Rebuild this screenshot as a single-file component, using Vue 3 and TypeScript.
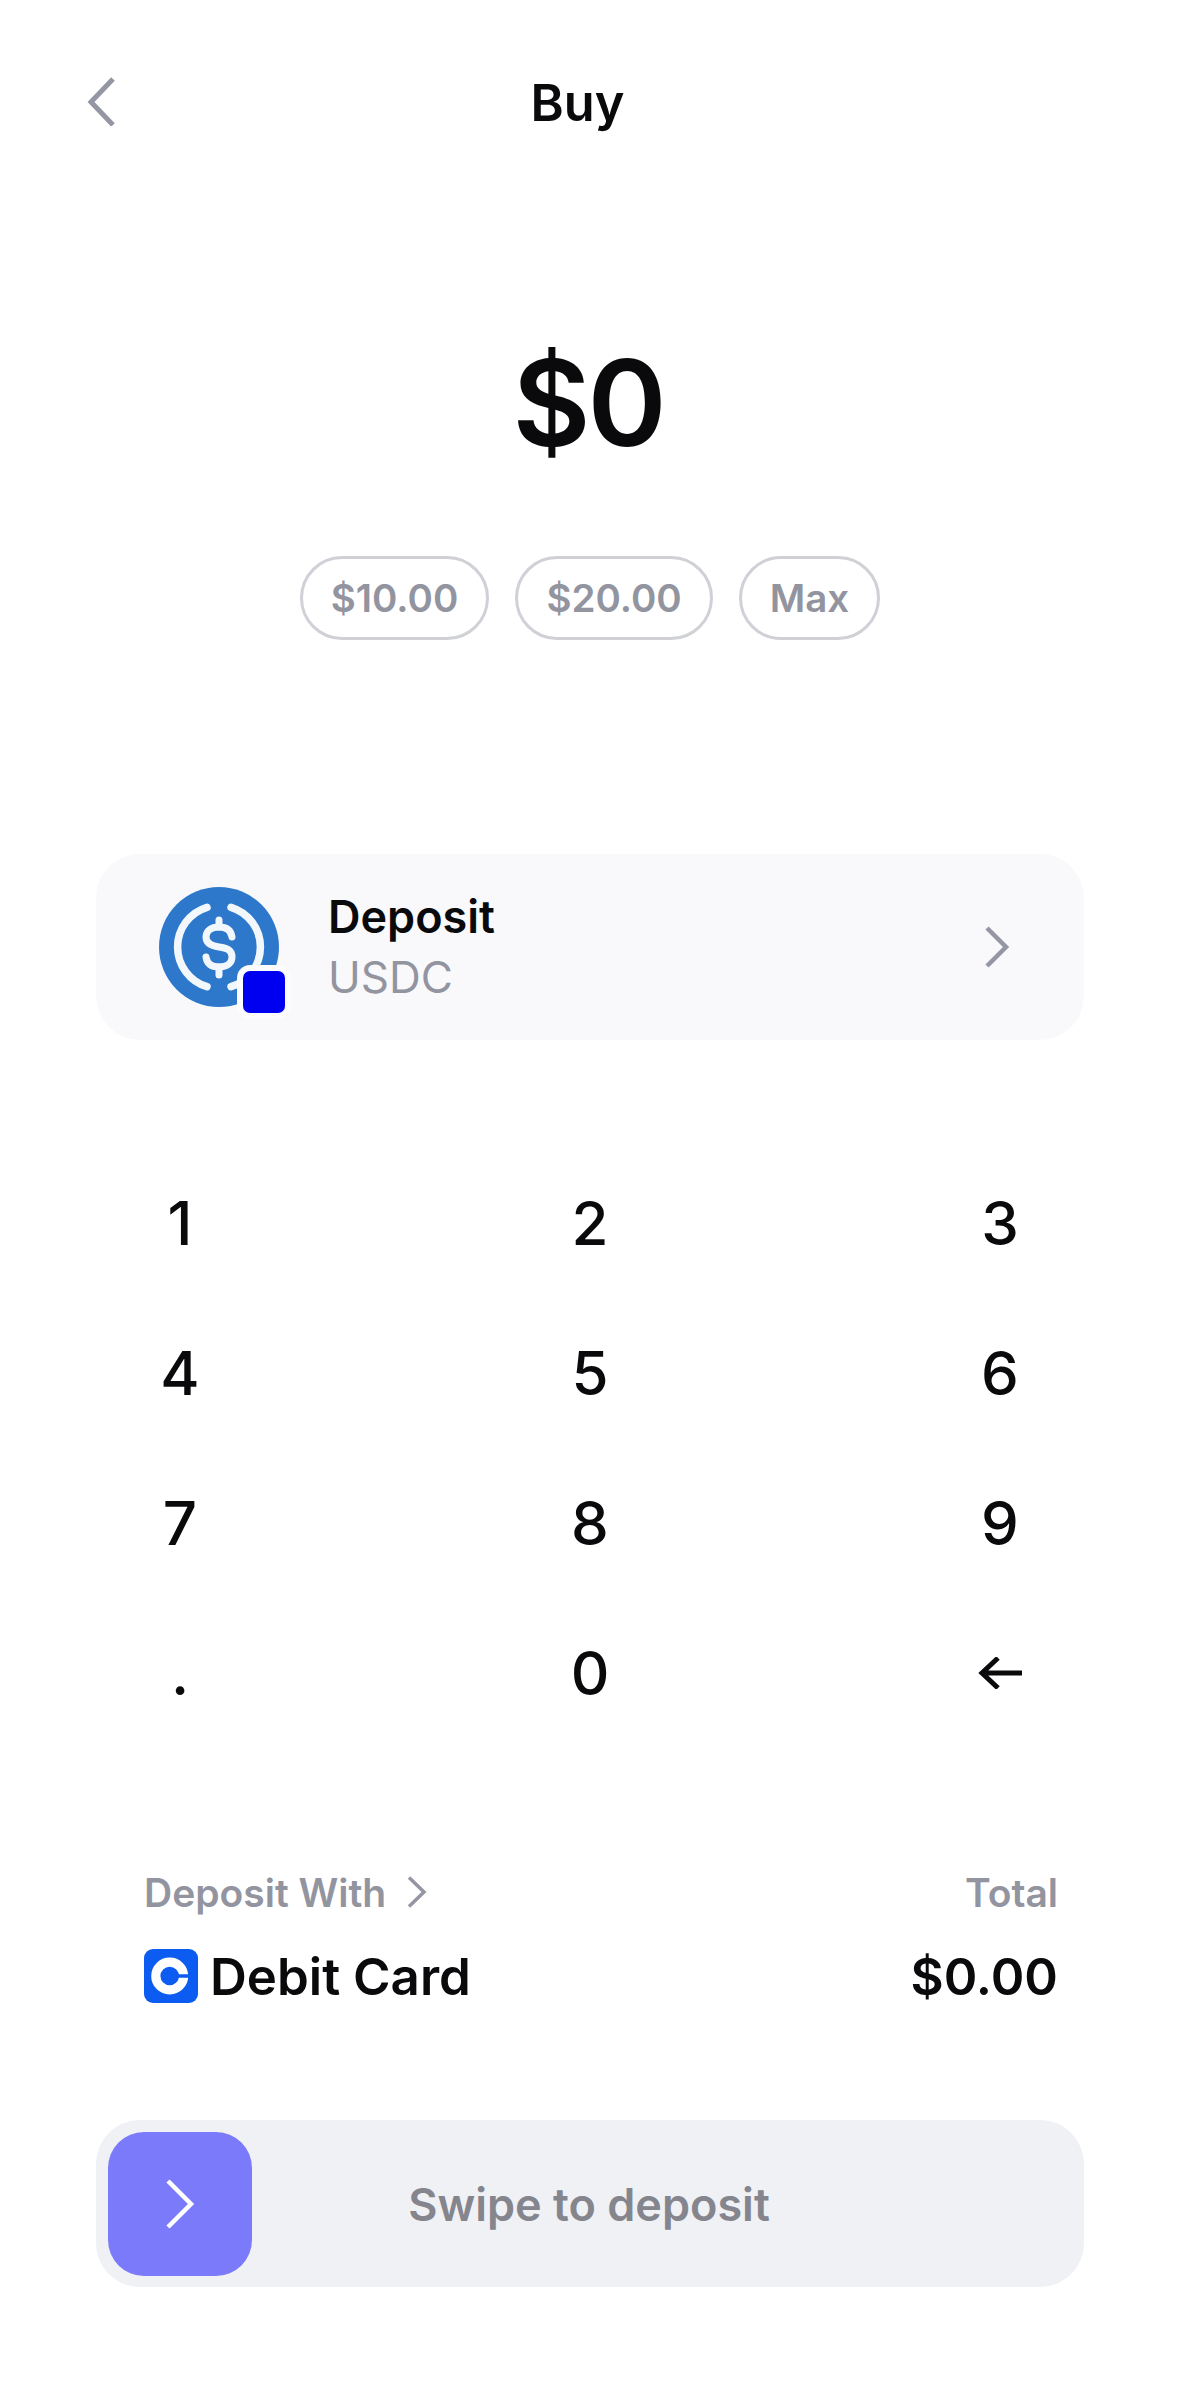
<script setup lang="ts">
const chips: string[] = ['$10.00', '$20.00', 'Max']
const keys: string[] = ['1', '2', '3', '4', '5', '6', '7', '8', '9', '.', '0']
</script>

<template>
  <div class="page">
    <header class="top">
      <svg class="back" width="30" height="50" viewBox="0 0 30 50" fill="none">
        <path d="M26 3 4 26l22 23" stroke="#9596a3" stroke-width="5" />
      </svg>
      <h1 class="title">Buy</h1>
    </header>

    <div class="amount">$0</div>

    <div class="chips">
      <button v-for="c in chips" :key="c" class="chip">{{ c }}</button>
    </div>

    <div class="asset">
      <div class="coin">
        <svg width="120" height="120" viewBox="0 0 120 120" fill="none">
          <circle cx="60" cy="60" r="60" fill="#2e78cc" />
          <path d="M48 20.300a41.500 41.500 0 0 0 0 79.400" stroke="#f2f7fc" stroke-width="7.500" stroke-linecap="round" />
          <path d="M72 20.300a41.500 41.500 0 0 1 0 79.400" stroke="#f2f7fc" stroke-width="7.500" stroke-linecap="round" />
          <path d="M73 50c-1-7-6-10-13-10-8 0-13 4-13 10 0 7 6 9 13 10 8 1 13 3 13 10 0 6-5 10-13 10-7 0-12-3-13-10" stroke="#f2f7fc" stroke-width="7" stroke-linecap="round" />
          <path d="M60 33v7M60 80v8" stroke="#f2f7fc" stroke-width="7" stroke-linecap="round" />
        </svg>
        <span class="badge"></span>
      </div>
      <div class="asset-text">
        <div class="asset-name">Deposit</div>
        <div class="asset-sub">USDC</div>
      </div>
      <svg class="asset-arrow" width="26" height="42" viewBox="0 0 26 42" fill="none">
        <path d="M3 2l19 19L3 40" stroke="#9596a3" stroke-width="4.500" />
      </svg>
    </div>

    <div class="pad">
      <div v-for="k in keys" :key="k" class="key">{{ k }}</div>
      <div class="key">
        <svg width="44" height="32" viewBox="0 0 44 32" fill="none">
          <path d="M20 1 4 16l16 15M4 16h42" stroke="#0a0a0c" stroke-width="5" />
        </svg>
      </div>
    </div>

    <div class="summary">
      <div class="col">
        <div class="label">
          Deposit With
          <svg class="label-arrow" width="20" height="32" viewBox="0 0 20 32" fill="none">
            <path d="M2 1.500l15 14.500L2 30.500" stroke="#9596a3" stroke-width="3.500" />
          </svg>
        </div>
        <div class="method">
          <svg class="cb" width="54" height="54" viewBox="0 0 54 54" fill="none">
            <rect width="54" height="54" rx="9" fill="#0d5cf2" />
            <circle cx="25.700" cy="27" r="13.900" stroke="#fff" stroke-width="9.200" />
            <path d="M25 27h20" stroke="#0d5cf2" stroke-width="3.500" />
          </svg>
          <span>Debit Card</span>
        </div>
      </div>
      <div class="col right">
        <div class="label">Total</div>
        <div class="method">$0.00</div>
      </div>
    </div>

    <div class="swipe">
      <div class="knob">
        <svg width="30" height="50" viewBox="0 0 30 50" fill="none">
          <path d="M3 2l23 23L3 48" stroke="#fff" stroke-width="4.500" />
        </svg>
      </div>
      <span class="swipe-text">Swipe to deposit</span>
    </div>
  </div>
</template>

<style>
html, body { margin: 0; background: #fff; }
</style>

<style scoped>
.page {
  width: 1180px;
  height: 2396px;
  box-sizing: border-box;
  padding: 0 96px;
  background: #fff;
  font-family: Inter, "Liberation Sans", sans-serif;
  color: #0a0a0c;
  overflow: hidden;
}
.top {
  height: 206px;
  display: flex;
  align-items: center;
  position: relative;
  margin: 0 -96px;
  padding-left: 87px;
}
.back { display: block; flex: none; transform: translateY(-2px); }
.title {
  position: absolute;
  left: 0;
  width: 1155px;
  margin: 0;
  text-align: center;
  font-size: 50.500px;
  font-weight: 600;
  line-height: 60px;
}
.amount {
  margin-top: 162px;
  height: 70px;
  line-height: 70px;
  text-align: center;
  font-size: 120px;
  font-weight: 600;
  letter-spacing: -3px;
  transform: translateX(-2px);
}
.chips {
  margin-top: 118px;
  display: flex;
  justify-content: center;
  gap: 26px;
}
.chip {
  height: 84px;
  padding: 0 28px;
  box-sizing: border-box;
  border: 3px solid #d0d1d6;
  border-radius: 42px;
  background: #fff;
  color: #9294a0;
  font-family: inherit;
  font-size: 38.500px;
  font-weight: 600;
}
.asset {
  margin-top: 214px;
  height: 186px;
  border-radius: 44px;
  background: #f9f9fb;
  display: flex;
  align-items: center;
  padding: 0 74px 0 63px;
}
.coin { position: relative; width: 120px; height: 120px; flex: none; }
.coin svg { display: block; }
.badge {
  position: absolute;
  left: 84px;
  top: 84px;
  width: 42px;
  height: 42px;
  background: #0000f0;
  border-radius: 7px;
  box-shadow: 0 0 0 6px #fcfcfd;
}
.asset-text { margin-left: 49px; flex: 1; }
.asset-name { font-size: 45px; font-weight: 600; line-height: 60px; }
.asset-sub { font-size: 44px; color: #9294a0; line-height: 60px; }
.pad {
  margin-top: 108px;
  margin-left: -96px;
  margin-right: -96px;
  display: grid;
  grid-template-columns: repeat(3, 200px);
  justify-content: space-between;
  padding: 0 80px;
  grid-auto-rows: 150px;
}
.key {
  display: flex;
  align-items: center;
  justify-content: center;
  font-size: 60px;
  font-weight: 500;
}
.summary {
  margin-top: 117px;
  padding: 0 26px 0 48px;
  display: flex;
  justify-content: space-between;
}
.col { display: flex; flex-direction: column; }
.right { align-items: flex-end; }
.label {
  display: flex;
  align-items: center;
  gap: 22px;
  height: 54px;
  font-size: 39px;
  font-weight: 600;
  color: #9294a0;
}
.label-arrow { margin-left: -1px; }
.method {
  margin-top: 30px;
  display: flex;
  align-items: center;
  gap: 12px;
  height: 54px;
  font-size: 51px;
  font-weight: 600;
}
.cb { flex: none; }
.swipe {
  margin-top: 117px;
  height: 167px;
  border-radius: 44px;
  background: #eff1f5;
  display: flex;
  align-items: center;
  position: relative;
  padding-left: 12px;
}
.knob {
  width: 144px;
  height: 144px;
  border-radius: 36px;
  background: #7a7afb;
  display: flex;
  align-items: center;
  justify-content: center;
  flex: none;
}
.swipe-text {
  position: absolute;
  left: 0;
  right: 2px;
  padding-top: 2px;
  text-align: center;
  font-size: 45px;
  font-weight: 600;
  color: #85858e;
}
</style>
